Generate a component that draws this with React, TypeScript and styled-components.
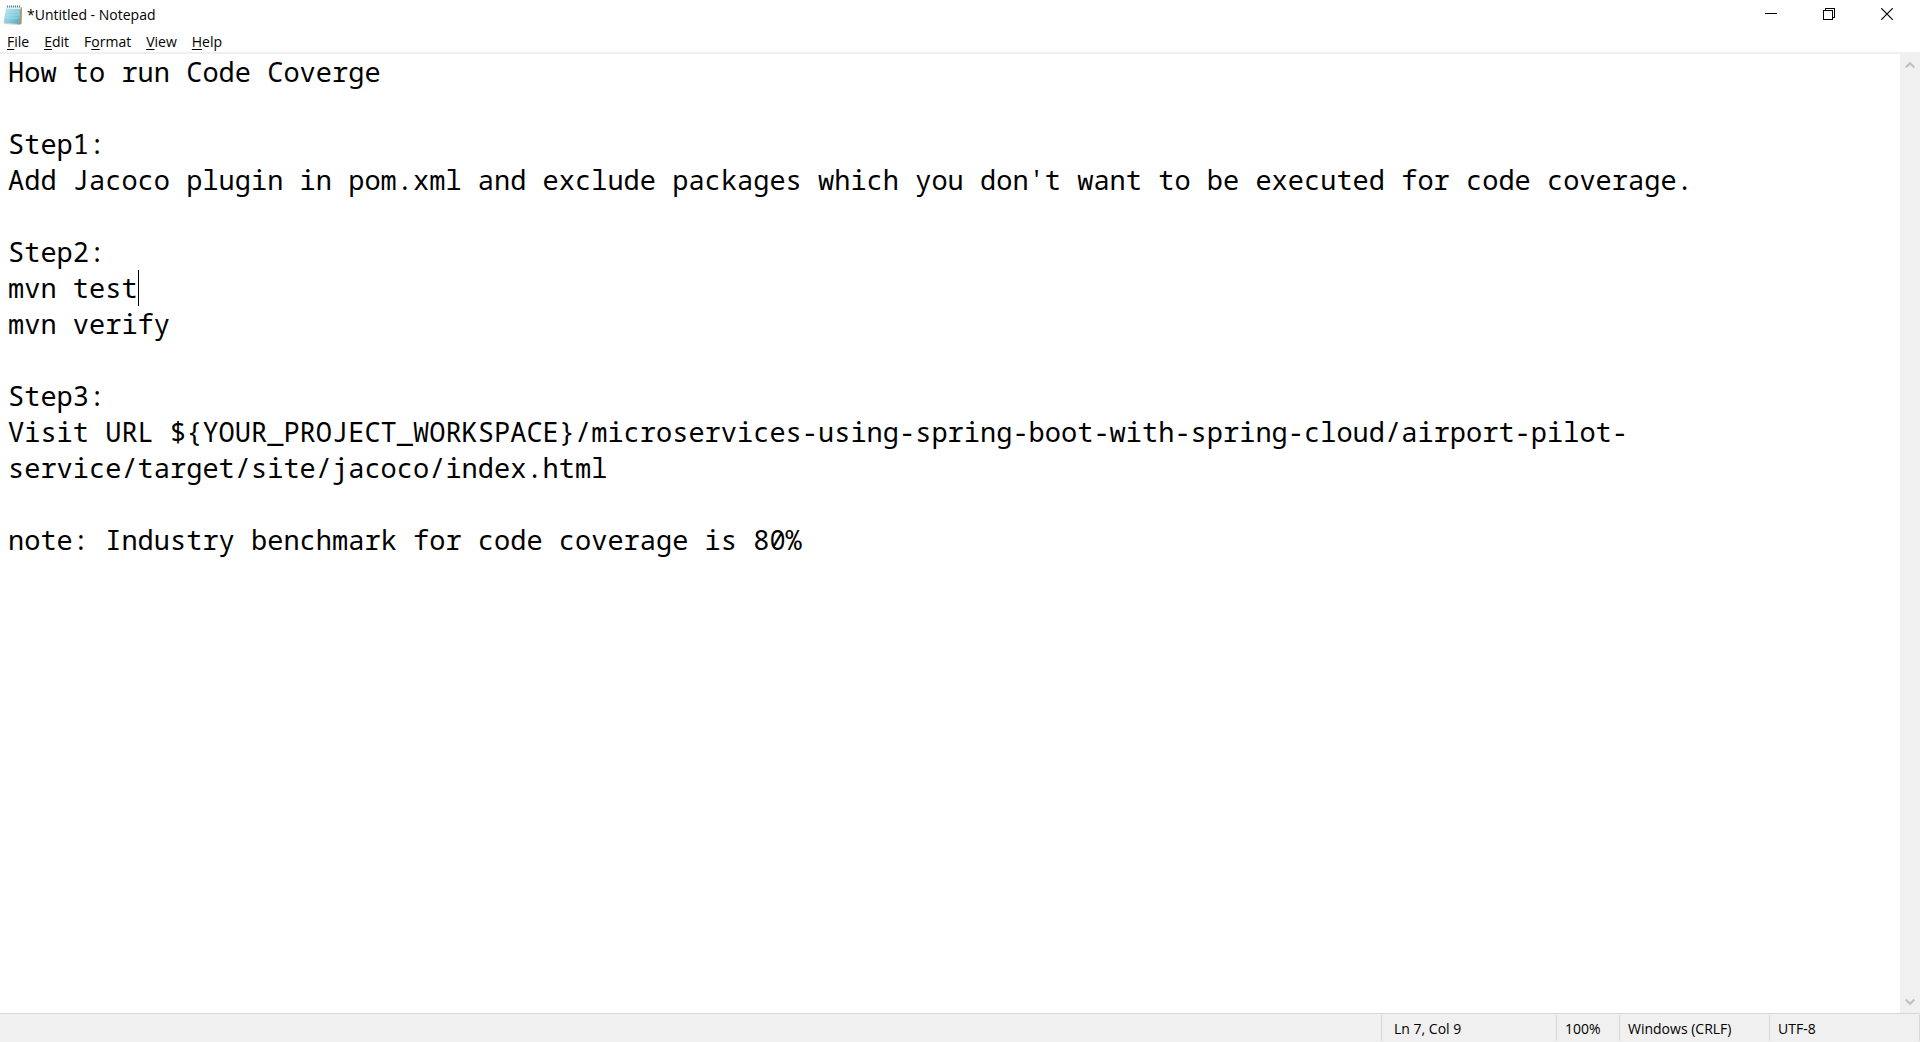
import React, { useState } from "react";
import styled, { createGlobalStyle } from "styled-components";

const GlobalStyle = createGlobalStyle`
  * { box-sizing: border-box; }
  html, body, #root { height: 100%; margin: 0; }
  body { background: #fff; color: #000; font: 14px/20px "Open Sans", "Noto Sans", sans-serif; overflow: hidden; }
  button, textarea { font: inherit; color: inherit; border: 0; padding: 0; margin: 0; background: none; }
`;

const Window = styled.div`
  display: flex;
  flex-direction: column;
  height: 100%;
`;

const TitleBar = styled.header`
  display: flex;
  align-items: center;
  height: 30px;
  padding: 0 4px 0 3px;
`;

const Title = styled.h1`
  flex: 1;
  margin: 0 0 0 4px;
  font-size: 14px;
  font-weight: 400;
`;

const WindowButton = styled.button`
  display: flex;
  align-items: center;
  justify-content: center;
  align-self: flex-start;
  width: 58px;
  height: 28px;
  &:hover { background: #e5e5e5; }
`;

const MenuBar = styled.nav`
  display: flex;
  gap: 1px;
  height: 24px;
  border-bottom: 2px solid #f0f0f0;
`;

const MenuButton = styled.button`
  padding: 2px 7px 0;
  line-height: 20px;
  &:hover { background: #e5f3ff; }
`;

const Key = styled.span`
  text-decoration: underline;
  text-underline-offset: 2px;
  text-decoration-thickness: 1px;
`;

const Editor = styled.main`
  flex: 1;
  display: flex;
  min-height: 0;
`;

const Page = styled.div`
  position: relative;
  flex: 1;
  font: 27px/36px "Noto Sans Mono", "DejaVu Sans Mono", monospace;
`;

const TextBox = styled.textarea`
  display: block;
  width: 100%;
  height: 100%;
  padding: 0 8px;
  resize: none;
  outline: none;
  overflow: hidden;
  caret-color: transparent;
`;

const Caret = styled.span<{ $line: number; $column: number }>`
  position: absolute;
  left: calc(8px + ${(p) => p.$column - 1}ch);
  top: calc(${(p) => p.$line - 1} * 36px);
  width: 1px;
  height: 36px;
  background: #000;
`;

const ScrollBar = styled.div`
  display: flex;
  flex-direction: column;
  justify-content: space-between;
  width: 20px;
  background: #f0f0f0;
`;

const ScrollButton = styled.button`
  display: flex;
  align-items: center;
  justify-content: center;
  height: 22px;
`;

const StatusBar = styled.footer`
  display: flex;
  justify-content: flex-end;
  height: 29px;
  padding: 1px 0;
  border-top: 1px solid #d7d7d7;
  background: #f0f0f0;
`;

const StatusCell = styled.div<{ $width: number; $indent?: number }>`
  width: ${(p) => p.$width}px;
  padding-left: ${(p) => p.$indent ?? 8}px;
  border-left: 1px solid #d7d7d7;
  line-height: 28px;
  white-space: nowrap;
  &:last-child { border-right: 1px solid #d7d7d7; }
`;

const NotepadIcon = () => (
  <svg width="20" height="22" viewBox="0 0 20 22" aria-hidden="true">
    <defs>
      <linearGradient id="cover" x1="0" y1="0" x2="1" y2="1">
        <stop offset="0" stopColor="#c9ebf3" />
        <stop offset=".5" stopColor="#8fd0e0" />
        <stop offset="1" stopColor="#4fa6bd" />
      </linearGradient>
    </defs>
    <path d="M4 3 19 3 18.500 20 16 21 1 20Z" fill="#d9cfbd" />
    <path d="M17.500 4 19 3.500 18.500 19.500 15.500 21Z" fill="#a89578" />
    <path d="M3.500 2.500H17.500L16 20 0.500 18.500Z" fill="url(#cover)" />
    <path d="M4 3H17.500V5H3.500Z" fill="#dff2f6" />
    <path d="M4 2.500H18" stroke="#6f7f86" strokeWidth="2" strokeDasharray="1 1" />
    <path d="M3.500 8H16M3 11H16M2.500 14H15.500" stroke="#b5e2ed" strokeWidth=".6" />
  </svg>
);

const Chevron = ({ down = false }: { down?: boolean }) => (
  <svg width="10" height="8" viewBox="0 0 10 8" aria-hidden="true">
    <path d={down ? "M.7 1.500 5 5.800 9.300 1.500" : "M.7 6.500 5 2.200 9.300 6.500"} fill="none" stroke="#bfbfbf" strokeWidth="2" />
  </svg>
);

const menus = [
  { before: "", key: "F", after: "ile" },
  { before: "", key: "E", after: "dit" },
  { before: "F", key: "o", after: "rmat" },
  { before: "", key: "V", after: "iew" },
  { before: "", key: "H", after: "elp" },
];

const initialText = `How to run Code Coverge

Step1:
Add Jacoco plugin in pom.xml and exclude packages which you don't want to be executed for code coverage.

Step2:
mvn test
mvn verify

Step3:
Visit URL \${YOUR_PROJECT_WORKSPACE}/microservices-using-spring-boot-with-spring-cloud/airport-pilot-service/target/site/jacoco/index.html

note: Industry benchmark for code coverage is 80%`;

export default function App() {
  const [text, setText] = useState(initialText);
  const caret = { line: 7, column: 9 };

  return (
    <Window>
      <GlobalStyle />
      <TitleBar>
        <NotepadIcon />
        <Title>*Untitled - Notepad</Title>
        <WindowButton aria-label="Minimize">
          <svg width="12" height="12" shapeRendering="crispEdges"><path d="M0 5.500H12" stroke="#000" /></svg>
        </WindowButton>
        <WindowButton aria-label="Restore">
          <svg width="12" height="12" fill="none" stroke="#000" shapeRendering="crispEdges">
            <path d="M.5 2.500H9.500V11.500H.5ZM2.500 2.500V.5H11.500V9.500H9.500" />
          </svg>
        </WindowButton>
        <WindowButton aria-label="Close">
          <svg width="12" height="12"><path d="M.3.3 11.700 11.700M11.700.3.3 11.700" stroke="#000" strokeWidth="1.200" /></svg>
        </WindowButton>
      </TitleBar>
      <MenuBar aria-label="Menu">
        {menus.map((m) => (
          <MenuButton key={m.key}>{m.before}<Key>{m.key}</Key>{m.after}</MenuButton>
        ))}
      </MenuBar>
      <Editor>
        <Page>
          <TextBox aria-label="Text editor" spellCheck={false} value={text} onChange={(e) => setText(e.target.value)} />
          <Caret $line={caret.line} $column={caret.column} />
        </Page>
        <ScrollBar>
          <ScrollButton aria-label="Scroll up"><Chevron /></ScrollButton>
          <ScrollButton aria-label="Scroll down"><Chevron down /></ScrollButton>
        </ScrollBar>
      </Editor>
      <StatusBar>
        <StatusCell $width={175} $indent={12}>Ln {caret.line}, Col {caret.column}</StatusCell>
        <StatusCell $width={63}>100%</StatusCell>
        <StatusCell $width={150}>Windows (CRLF)</StatusCell>
        <StatusCell $width={151}>UTF-8</StatusCell>
      </StatusBar>
    </Window>
  );
}
